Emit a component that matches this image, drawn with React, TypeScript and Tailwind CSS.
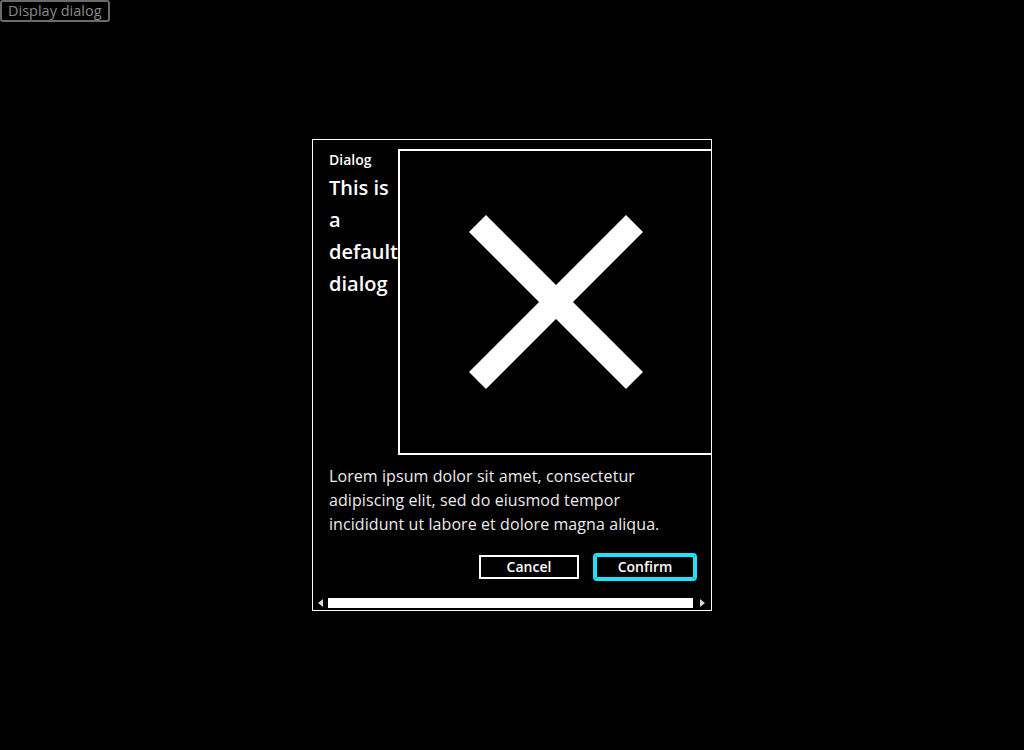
export default function App() {
  return (
    <div className="min-h-[750px] w-full bg-black font-['Open_Sans',sans-serif] text-white">
      <button
        type="button"
        className="flex h-[22px] items-center rounded-[3px] border-2 border-[#6b6b6b] px-[6px] text-[14.5px] leading-5 text-[#8a8a8a]"
      >
        Display dialog
      </button>

      <div className="fixed inset-0 flex items-center justify-center">
        <div
          role="dialog"
          aria-modal="true"
          className="flex h-[472px] w-[400px] flex-col overflow-hidden border border-white bg-black"
        >
          <div className="flex flex-1 flex-col px-4 pt-[9px] pb-4">
            <div className="flex items-start">
              <div className="mt-[1px] flex flex-col">
                <span className="mb-[2px] text-sm leading-5 font-semibold">Dialog</span>
                <h2 className="text-xl leading-8 font-semibold">This is a default dialog</h2>
              </div>
              <button
                type="button"
                aria-label="Close"
                className="flex h-[306px] w-[316px] shrink-0 items-center justify-center border-2 border-white bg-black"
              >
                <svg width="174" height="174" viewBox="0 0 174 174" fill="none">
                  <path d="M8.5 8.5L165.5 165.5M165.5 8.5L8.5 165.5" stroke="white" strokeWidth="24" />
                </svg>
              </button>
            </div>

            <p className="mt-[9px] text-base leading-6 tracking-[0.005em] text-[#ececec]">
              Lorem ipsum dolor sit amet, consectetur adipiscing elit, sed do eiusmod tempor incididunt ut labore et
              dolore magna aliqua.
            </p>

            <div className="mt-[19px] flex justify-end gap-4">
              <button
                type="button"
                className="flex h-6 w-[100px] items-center justify-center border-2 border-white text-sm leading-5 font-semibold"
              >
                Cancel
              </button>
              <button
                type="button"
                className="flex h-6 w-[100px] items-center justify-center rounded-[2px] border-2 border-[#1ee3fa] text-sm leading-5 font-semibold outline-2 outline-[#1ee3fa]"
              >
                Confirm
              </button>
            </div>
          </div>

          {/* horizontal scrollbar */}
          <div className="flex h-[15px] shrink-0 items-center">
            <div className="flex w-[15px] justify-center">
              <span className="h-0 w-0 border-y-4 border-r-[5px] border-y-transparent border-r-[#d8d8d8]" />
            </div>
            <div className="h-[10px] w-[365px] bg-white" />
            <div className="flex flex-1 justify-center">
              <span className="h-0 w-0 border-y-4 border-l-[5px] border-y-transparent border-l-[#d8d8d8]" />
            </div>
          </div>
        </div>
      </div>
    </div>
  );
}
